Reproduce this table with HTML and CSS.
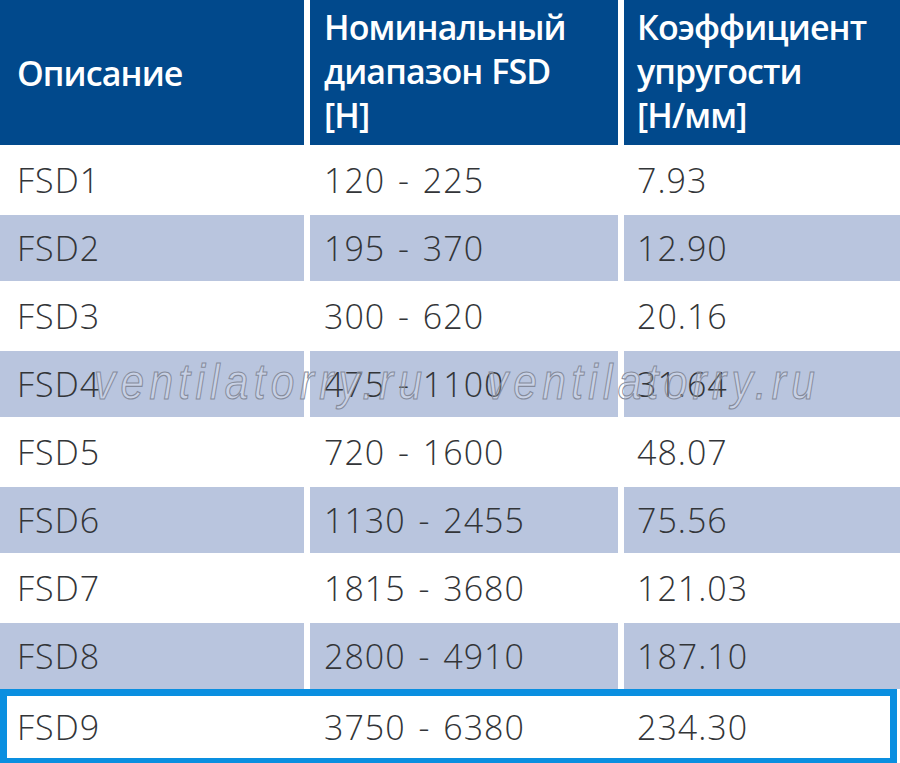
FILE: index.html
```html
<!DOCTYPE html>
<html lang="ru">
<head>
<meta charset="utf-8">
<title>FSD</title>
<link rel="stylesheet" href="styles.css">
</head>
<body>
<div class="table">
  <div class="row head">
    <div class="cell c1 mid">Описание</div>
    <div class="cell c2">Номинальный<br>диапазон FSD<br>[Н]</div>
    <div class="cell c3">Коэффициент<br>упругости<br>[Н/мм]</div>
  </div>
  <div class="row"><div class="cell c1">FSD1</div><div class="cell c2">120 - 225</div><div class="cell c3">7.93</div></div>
  <div class="row alt"><div class="cell c1">FSD2</div><div class="cell c2">195 - 370</div><div class="cell c3">12.90</div></div>
  <div class="row"><div class="cell c1">FSD3</div><div class="cell c2">300 - 620</div><div class="cell c3">20.16</div></div>
  <div class="row alt wm-row"><div class="cell c1">FSD4</div><div class="cell c2">475 - 1100</div><div class="cell c3">31.64</div>
    <div class="watermark"><span>ventilatorry.ru</span><span>ventilatorry.ru</span></div>
  </div>
  <div class="row"><div class="cell c1">FSD5</div><div class="cell c2">720 - 1600</div><div class="cell c3">48.07</div></div>
  <div class="row alt"><div class="cell c1">FSD6</div><div class="cell c2">1130 - 2455</div><div class="cell c3">75.56</div></div>
  <div class="row"><div class="cell c1">FSD7</div><div class="cell c2">1815 - 3680</div><div class="cell c3">121.03</div></div>
  <div class="row alt"><div class="cell c1">FSD8</div><div class="cell c2">2800 - 4910</div><div class="cell c3">187.10</div></div>
  <div class="row selected"><div class="cell c1">FSD9</div><div class="cell c2">3750 - 6380</div><div class="cell c3">234.30</div></div>
</div>
</body>
</html>
```
FILE: styles.css
```css
html, body {
  margin: 0;
  padding: 0;
  background: #ffffff;
}
body {
  width: 900px;
  height: 763px;
  overflow: hidden;
  font-family: "Open Sans", "Noto Sans", sans-serif;
}
.table {
  display: flex;
  flex-direction: column;
  row-gap: 2px;
}
.row {
  display: grid;
  grid-template-columns: 304px 308px 1fr;
  column-gap: 6px;
  height: 66px;
}
.cell {
  display: flex;
  align-items: center;
  font-size: 34px;
  font-weight: 300;
  line-height: 44px;
  letter-spacing: 1px;
  word-spacing: 3px;
  color: #333538;
  white-space: nowrap;
}
.c1 { padding-left: 17px; }
.c2 { padding-left: 14px; }
.c3 { padding-left: 13px; }
.head {
  height: 145px;
}
.head .cell {
  background: #01498c;
  color: #ffffff;
  font-weight: 600;
  letter-spacing: -0.9px;
  word-spacing: 1px;
  display: block;
  padding-top: 5px;
  box-sizing: border-box;
}
.head .cell.mid {
  display: flex;
  align-items: center;
  padding-top: 0;
}
.alt .cell {
  background: #b9c5de;
}
.wm-row {
  position: relative;
}
.watermark {
  position: absolute;
  left: 94px;
  top: 6px;
  display: flex;
  column-gap: 70px;
  font-family: "Liberation Sans", sans-serif;
  font-style: italic;
  font-size: 50px;
  line-height: 50px;
  letter-spacing: 6.2px;
  color: rgba(255, 255, 255, 0.22);
  -webkit-text-stroke: 1.1px #858b9b;
  transform: scaleX(0.85);
  transform-origin: left center;
  pointer-events: none;
  white-space: nowrap;
}
.selected {
  height: 76px;
  margin-top: -2px;
  margin-right: 3px;
  border: 7px solid #0a8fe0;
  box-sizing: border-box;
  grid-template-columns: 297px 308px 1fr;
}
.selected .c1 { padding-left: 10px; }
```
